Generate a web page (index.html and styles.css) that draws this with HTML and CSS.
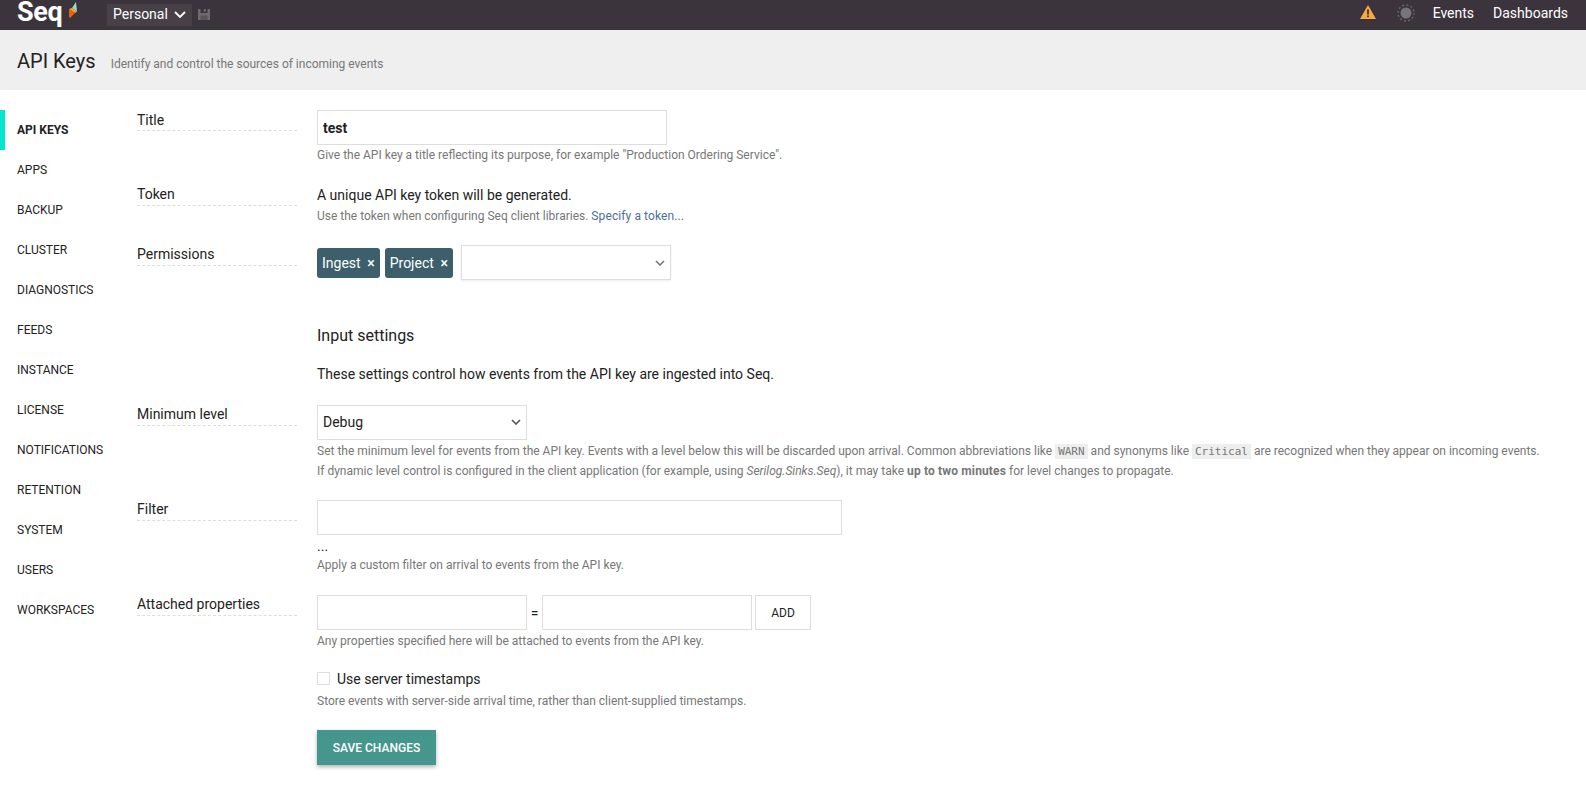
FILE: index.html
```html
<!DOCTYPE html>
<html lang="en">
<head>
<meta charset="utf-8">
<title>API Keys</title>
<link rel="stylesheet" href="styles.css">
</head>
<body>
<header class="topbar">
  <div class="brand">
    <span class="brand-name">Seq</span>
    <svg class="brand-mark" width="8" height="16" viewBox="0 0 8 16"><polygon points="7,0 8,9.5 3,6" fill="#8fe0c4"/><polygon points="0,7 3,6 8,9.5 6,11" fill="#f9a43a"/><polygon points="0,7 6,11 1,16 0,15" fill="#e8610f"/></svg>
  </div>
  <div class="workspace">Personal
    <svg width="12" height="7" viewBox="0 0 12 7"><path d="M1 1l5 5 5-5" fill="none" stroke="#fff" stroke-width="1.8"/></svg>
  </div>
  <svg class="save-icon" width="12" height="11" viewBox="0 0 12 11"><path d="M0 0h2.5v4h7V0H12v11H0z" fill="#6e6a6e"/><rect x="5.8" y="0" width="2" height="2.8" fill="#6e6a6e"/><rect x="2.4" y="6.5" width="7.2" height="4.5" fill="#5a545a"/></svg>
  <div class="top-right">
    <svg class="warn" width="16" height="14" viewBox="0 0 16 14"><path d="M8 0L16 14H0z" fill="#f9a73e"/><rect x="7.1" y="4.5" width="1.8" height="5" fill="#3c343c"/><rect x="7.1" y="10.4" width="1.8" height="1.8" fill="#3c343c"/></svg>
    <svg class="sun" width="18" height="18" viewBox="0 0 18 18"><circle cx="9" cy="9" r="5.5" fill="#77747a"/><circle cx="9" cy="9" r="8" fill="none" stroke="#6a666b" stroke-width="1.4" stroke-dasharray="2 2.2"/></svg>
    <a class="top-link" href="#">Events</a>
    <a class="top-link" href="#">Dashboards</a>
  </div>
</header>
<div class="subheader">
  <h1>API Keys</h1>
  <span class="subtitle">Identify and control the sources of incoming events</span>
</div>
<div class="content">
  <nav class="sidebar">
    <a class="nav-item active" href="#">API KEYS</a>
    <a class="nav-item" href="#">APPS</a>
    <a class="nav-item" href="#">BACKUP</a>
    <a class="nav-item" href="#">CLUSTER</a>
    <a class="nav-item" href="#">DIAGNOSTICS</a>
    <a class="nav-item" href="#">FEEDS</a>
    <a class="nav-item" href="#">INSTANCE</a>
    <a class="nav-item" href="#">LICENSE</a>
    <a class="nav-item" href="#">NOTIFICATIONS</a>
    <a class="nav-item" href="#">RETENTION</a>
    <a class="nav-item" href="#">SYSTEM</a>
    <a class="nav-item" href="#">USERS</a>
    <a class="nav-item" href="#">WORKSPACES</a>
  </nav>
  <main class="form">
    <div class="row row-title">
      <div class="label">Title</div>
      <div class="field">
        <input class="input input-title" type="text" value="test">
        <p class="help">Give the API key a title reflecting its purpose, for example "Production Ordering Service".</p>
      </div>
    </div>
    <div class="row row-token">
      <div class="label">Token</div>
      <div class="field">
        <p class="text">A unique API key token will be generated.</p>
        <p class="help help-token">Use the token when configuring Seq client libraries. <a href="#">Specify a token...</a></p>
      </div>
    </div>
    <div class="row row-perm">
      <div class="label">Permissions</div>
      <div class="field perm-field">
        <span class="tag">Ingest <span class="x">×</span></span>
        <span class="tag">Project <span class="x">×</span></span>
        <div class="select select-perm"><svg width="10" height="6" viewBox="0 0 10 6"><path d="M1 1l4 4 4-4" fill="none" stroke="#777" stroke-width="1.6"/></svg></div>
      </div>
    </div>
    <div class="section">
      <h2>Input settings</h2>
      <p class="text">These settings control how events from the API key are ingested into Seq.</p>
    </div>
    <div class="row row-level">
      <div class="label">Minimum level</div>
      <div class="field">
        <div class="select select-level">Debug<svg width="10" height="6" viewBox="0 0 10 6"><path d="M1 1l4 4 4-4" fill="none" stroke="#555" stroke-width="1.6"/></svg></div>
        <p class="help help-level">Set the minimum level for events from the API key. Events with a level below this will be discarded upon arrival. Common abbreviations like <code>WARN</code> and synonyms like <code>Critical</code> are recognized when they appear on incoming events.</p>
        <p class="help">If dynamic level control is configured in the client application (for example, using <em>Serilog.Sinks.Seq</em>), it may take <strong>up to two minutes</strong> for level changes to propagate.</p>
      </div>
    </div>
    <div class="row row-filter">
      <div class="label">Filter</div>
      <div class="field">
        <input class="input input-filter" type="text">
        <div class="dots">...</div>
        <p class="help">Apply a custom filter on arrival to events from the API key.</p>
      </div>
    </div>
    <div class="row row-props">
      <div class="label">Attached properties</div>
      <div class="field">
        <div class="prop-line">
          <input class="input input-prop" type="text">
          <span class="eq">=</span>
          <input class="input input-prop" type="text">
          <button class="btn-add" type="button">ADD</button>
        </div>
        <p class="help help-props">Any properties specified here will be attached to events from the API key.</p>
      </div>
    </div>
    <div class="row row-check">
      <div class="label-empty"></div>
      <div class="field">
        <label class="check"><span class="box"></span>Use server timestamps</label>
        <p class="help help-check">Store events with server-side arrival time, rather than client-supplied timestamps.</p>
        <button class="btn-save" type="button">SAVE CHANGES</button>
      </div>
    </div>
  </main>
</div>
</body>
</html>
```
FILE: styles.css
```css
* { box-sizing: border-box; }
html, body { margin: 0; padding: 0; height: 791px; overflow: hidden; }
body { font-family: Roboto, "Liberation Sans", sans-serif; font-size: 14px; color: #222; background: #fff; }
p { margin: 0; }
a { text-decoration: none; }

.topbar { height: 30px; background: #3c343c; display: flex; align-items: center; color: #fff; }
.brand { width: 107px; padding-left: 17px; display: flex; align-items: flex-start; height: 30px; }
.brand-name { font-size: 27px; font-weight: 700; line-height: 25px; letter-spacing: -0.3px; }
.brand-mark { margin: 2px 0 0 6px; }
.workspace { height: 22px; background: #474047; display: flex; align-items: center; gap: 6px; padding: 0 6px 2px 6px; font-size: 14px; }
.save-icon { margin-left: 6px; margin-top: -1px; }
.top-right { margin-left: auto; display: flex; align-items: center; padding-right: 18px; }
.warn { margin-right: 21px; margin-top: -6px; }
.sun { margin-right: 18px; margin-top: -4px; }
.top-link { color: #fff; font-size: 14px; margin-left: 19px; margin-top: -5px; }
.sun + .top-link { margin-left: 0; }

.subheader { height: 60px; background: #efefef; display: flex; align-items: baseline; padding: 18px 0 0 17px; }
.subheader h1 { margin: 0; font-size: 20px; font-weight: 400; color: #222; line-height: 26px; }
.subtitle { margin-left: 15px; font-size: 12px; color: #777; }

.content { display: flex; }
.sidebar { width: 137px; padding-top: 20px; display: flex; flex-direction: column; flex: none; }
.nav-item { height: 40px; line-height: 40px; padding-left: 17px; font-size: 12px; color: #222; }
.nav-item.active { font-weight: 700; border-left: 5px solid #00e8d0; padding-left: 12px; }

.form { flex: 1; padding-top: 20px; }
.row { display: flex; }
.label { width: 160px; height: 21px; margin-right: 20px; border-bottom: 1px dashed #ddd; font-size: 14px; line-height: 18px; flex: none; }
.row-title .label { padding-top: 1px; }
.label-empty { width: 160px; margin-right: 20px; flex: none; }
.field { flex: 1; min-width: 0; }

.input { display: block; height: 35px; border: 1px solid #ddd; background: #fff; padding: 0 5px; font: 14px Roboto, sans-serif; color: #222; outline: none; }
.input-title { width: 350px; font-weight: 700; }
.input-filter { width: 525px; }
.input-prop { width: 210px; }
.help { font-size: 12px; color: #777; line-height: 20px; }
.help a { color: #4a6f9c; letter-spacing: .1px; }
.help strong { letter-spacing: .15px; }
.text { font-size: 14px; line-height: 20px; color: #222; }
.row-token { margin-top: 20px; }
.help-token { margin-top: 1px; }
.row-perm { margin-top: 19px; }
.perm-field { display: flex; align-items: center; gap: 5px; }
.tag { height: 30px; background: #3d5f6c; color: #fff; border-radius: 3px; padding: 0 5px; display: flex; align-items: center; gap: 6.6px; font-size: 14px; }
.x { font-size: 14px; font-weight: 500; }
.select { border: 1px solid #ddd; height: 35px; display: flex; align-items: center; justify-content: space-between; padding: 0 5px; font-size: 14px; background: #fff; }
.select-perm { width: 210px; margin-left: 3px; justify-content: flex-end; box-shadow: 0 1px 2px rgba(0,0,0,.08); }
.select-level { width: 210px; padding-bottom: 2px; }

.section { margin-left: 180px; margin-top: 45px; }
.section h2 { margin: 0; font-size: 16px; font-weight: 400; line-height: 22px; color: #222; }
.section .text { margin-top: 17px; }
.row-level { margin-top: 21px; }
.help-level { margin-top: 1px; }
code { font-family: "DejaVu Sans Mono", monospace; font-size: 11px; line-height: 1; background: #eee; padding: 1px 3px; }
.row-filter { margin-top: 19px; }
.dots { font-size: 14px; line-height: 18px; margin-top: 2px; height: 18px; }
.row-props { margin-top: 20px; }
.prop-line { display: flex; align-items: center; }
.eq { width: 15px; text-align: center; font-size: 14px; }
.btn-add { width: 56px; height: 35px; margin-left: 3px; background: #fff; border: 1px solid #ddd; font: 12px Roboto, sans-serif; color: #222; }
.help-props { margin-top: 1px; }
.row-check { margin-top: 18px; }
.check { display: flex; align-items: center; font-size: 14px; line-height: 20px; }
.box { width: 13px; height: 13px; border: 1px solid #ddd; margin: -2px 7px 0 0; display: block; }
.help-check { margin-top: 2px; }
.btn-save { display: block; margin-top: 19px; width: 119px; height: 35px; background: #45968c; color: #fff; border: 0; font: 500 12px Roboto, sans-serif; box-shadow: 0 2px 4px rgba(0,0,0,.3); }
```
